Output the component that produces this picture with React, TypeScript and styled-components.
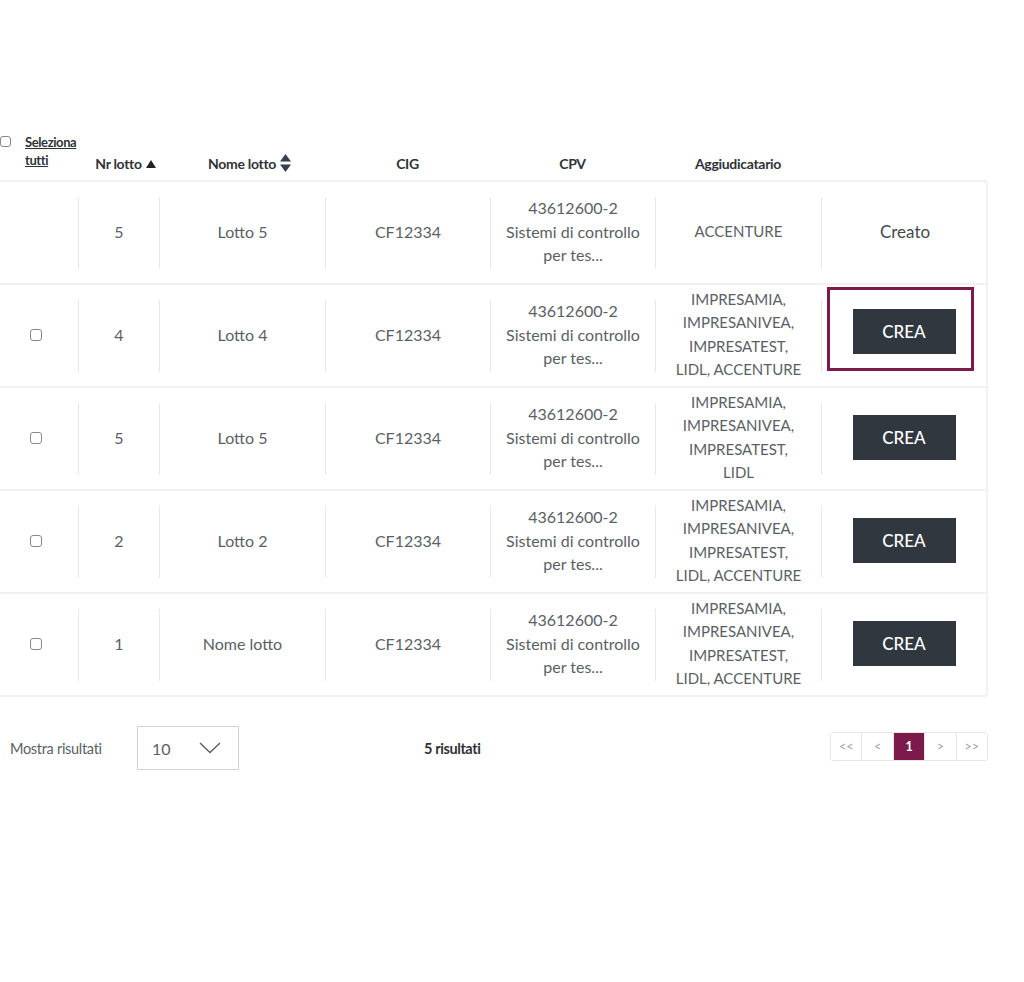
import React from "react";
import styled, { createGlobalStyle } from "styled-components";

const Global = createGlobalStyle`
  html, body { margin: 0; padding: 0; background: #fff; }
  body { font-family: Lato, "Open Sans", sans-serif; color: #5a5f66; }
  * { box-sizing: border-box; }
`;

const Page = styled.div`
  width: 1024px;
  height: 982px;
  padding-top: 130px;
`;

const COLS = "78px 81px 166px 165px 165px 166px 167px";

const HeaderRow = styled.div`
  display: grid;
  grid-template-columns: ${COLS};
  width: 988px;
  height: 50px;
  align-items: end;
  padding-bottom: 8px;
`;

const HeadCell = styled.div<{ $pad?: number }>`
  display: flex;
  align-items: center;
  justify-content: center;
  font-size: 14px;
  font-weight: 700;
  color: #2f3338;
  letter-spacing: -0.3px;
  gap: 4px;
  padding-left: ${(p) => p.$pad || 0}px;
`;

const SelectAll = styled.div`
  display: flex;
  align-items: flex-start;
  gap: 14px;
  align-self: start;
  padding-top: 3px;
`;

const SelectLink = styled.span`
  font-size: 13px;
  font-weight: 700;
  color: #2f3338;
  text-decoration: underline;
  line-height: 18px;
  letter-spacing: -0.4px;
`;

const Box = styled.span<{ $size?: number }>`
  display: inline-block;
  width: ${(p) => p.$size || 12}px;
  height: ${(p) => p.$size || 12}px;
  border: 1.5px solid #85888c;
  border-radius: 3px;
  background: #fff;
  flex: none;
`;

const HeadBox = styled(Box)`
  margin-top: 3px;
`;

const RowBox = styled(Box)`
  margin-right: 6px;
`;

const Body = styled.div`
  width: 988px;
  border: 2px solid #f1f1f1;
  border-left: none;
  border-radius: 0 4px 4px 0;
`;

const Row = styled.div`
  display: grid;
  grid-template-columns: ${COLS};
  height: 101px;
  box-sizing: content-box;
  align-items: center;
  & + & { border-top: 2px solid #f1f1f1; }
`;

const Cell = styled.div<{ $first?: boolean; $size?: number; $dark?: boolean }>`
  height: 72px;
  display: flex;
  align-items: center;
  justify-content: center;
  text-align: center;
  border-left: ${(p) => (p.$first ? "none" : "1px solid #e8e8e8")};
  font-size: ${(p) => p.$size || 16}px;
  line-height: 23.5px;
  color: ${(p) => (p.$dark ? "#44484d" : "#5a5f66")};
  white-space: pre-line;
  padding-bottom: 2px;
`;

const Button = styled.button`
  width: 103px;
  height: 45px;
  border: none;
  border-radius: 0;
  background: #30373f;
  color: #fff;
  font-family: Lato, "Open Sans", sans-serif;
  font-size: 17px;
  font-weight: 500;
  cursor: pointer;
  margin-right: 2px;
`;

const Highlight = styled.div`
  border: 3px solid #7d1a4c;
  padding: 19px 15px 14px 23px;
  margin-right: 10px;
  margin-bottom: 11px;
  & > button { margin-right: 0; }
`;

const Footer = styled.div`
  width: 988px;
  margin-top: 29px;
  display: flex;
  align-items: center;
`;

const FooterLabel = styled.span`
  font-size: 14.5px;
  color: #5a5f66;
  letter-spacing: -0.3px;
  margin-left: 10px;
  width: 127px;
`;

const Select = styled.div`
  width: 102px;
  height: 44px;
  border: 1px solid #cfd2d5;
  display: flex;
  align-items: center;
  justify-content: space-between;
  padding: 0 17px 0 14px;
  font-size: 16px;
  color: #5a5f66;
`;

const Results = styled.span`
  margin-left: 185px;
  font-size: 14.5px;
  font-weight: 700;
  color: #2f3338;
  letter-spacing: -0.4px;
`;

const Pager = styled.div`
  margin-left: auto;
  align-self: flex-start;
  margin-top: 6px;
  width: 158px;
  display: flex;
  border: 1px solid #e6e6e6;
  border-radius: 3px;
  height: 29px;
`;

const PageBtn = styled.span<{ $active?: boolean }>`
  flex: 1;
  display: flex;
  align-items: center;
  justify-content: center;
  font-size: 12.5px;
  font-weight: ${(p) => (p.$active ? 700 : 400)};
  color: ${(p) => (p.$active ? "#fff" : "#9a9ea3")};
  background: ${(p) => (p.$active ? "#7d1a4c" : "#fff")};
  & + & { border-left: 1px solid #e6e6e6; }
`;

const Tri = () => (
  <svg width="10" height="8" viewBox="0 0 10 8">
    <path d="M5 0 L10 8 L0 8 Z" fill="#1f2226" />
  </svg>
);

const SortBoth = () => (
  <svg width="11" height="18" viewBox="0 0 11 18">
    <path d="M5.5 0 L11 7.5 L0 7.5 Z" fill="#34404d" />
    <path d="M0 10.5 L11 10.5 L5.5 18 Z" fill="#34404d" />
  </svg>
);

const Chevron = () => (
  <svg width="22" height="12" viewBox="0 0 22 12">
    <path d="M1 1 L11 10.5 L21 1" fill="none" stroke="#5a5f66" strokeWidth="1.4" />
  </svg>
);

type RowData = {
  check: boolean;
  nr: string;
  nome: string;
  agg: string;
  state: "creato" | "crea" | "highlight";
};

const rows: RowData[] = [
  { check: false, nr: "5", nome: "Lotto 5", agg: "ACCENTURE", state: "creato" },
  { check: true, nr: "4", nome: "Lotto 4", agg: "IMPRESAMIA,\nIMPRESANIVEA,\nIMPRESATEST,\nLIDL, ACCENTURE", state: "highlight" },
  { check: true, nr: "5", nome: "Lotto 5", agg: "IMPRESAMIA,\nIMPRESANIVEA,\nIMPRESATEST,\nLIDL", state: "crea" },
  { check: true, nr: "2", nome: "Lotto 2", agg: "IMPRESAMIA,\nIMPRESANIVEA,\nIMPRESATEST,\nLIDL, ACCENTURE", state: "crea" },
  { check: true, nr: "1", nome: "Nome lotto", agg: "IMPRESAMIA,\nIMPRESANIVEA,\nIMPRESATEST,\nLIDL, ACCENTURE", state: "crea" },
];

export default function App() {
  return (
    <Page>
      <Global />
      <HeaderRow>
        <SelectAll>
          <HeadBox $size={11} />
          <SelectLink>
            Seleziona
            <br />
            tutti
          </SelectLink>
        </SelectAll>
        <HeadCell $pad={14}>
          Nr lotto<Tri />
        </HeadCell>
        <HeadCell $pad={15}>
          Nome lotto<SortBoth />
        </HeadCell>
        <HeadCell>CIG</HeadCell>
        <HeadCell>CPV</HeadCell>
        <HeadCell>Aggiudicatario</HeadCell>
        <HeadCell />
      </HeaderRow>
      <Body>
        {rows.map((r, i) => (
          <Row key={i}>
            <Cell $first>{r.check && <RowBox />}</Cell>
            <Cell>{r.nr}</Cell>
            <Cell>{r.nome}</Cell>
            <Cell>CF12334</Cell>
            <Cell>{"43612600-2\nSistemi di controllo\nper tes..."}</Cell>
            <Cell $size={15}>{r.agg}</Cell>
            <Cell $dark $size={17}>
              {r.state === "creato" && "Creato"}
              {r.state === "crea" && <Button>CREA</Button>}
              {r.state === "highlight" && (
                <Highlight>
                  <Button>CREA</Button>
                </Highlight>
              )}
            </Cell>
          </Row>
        ))}
      </Body>
      <Footer>
        <FooterLabel>Mostra risultati</FooterLabel>
        <Select>
          <span>10</span>
          <Chevron />
        </Select>
        <Results>5 risultati</Results>
        <Pager>
          <PageBtn>&lt;&lt;</PageBtn>
          <PageBtn>&lt;</PageBtn>
          <PageBtn $active>1</PageBtn>
          <PageBtn>&gt;</PageBtn>
          <PageBtn>&gt;&gt;</PageBtn>
        </Pager>
      </Footer>
    </Page>
  );
}
